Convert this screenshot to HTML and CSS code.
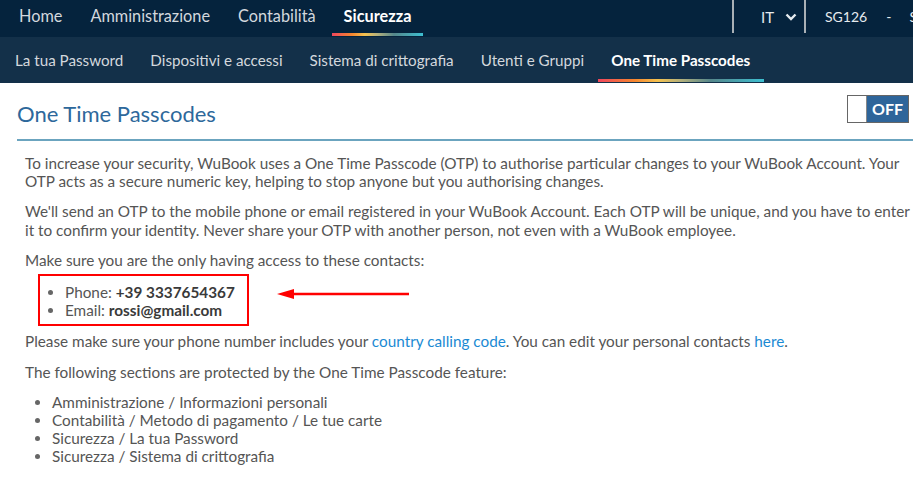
FILE: index.html
```html
<!DOCTYPE html>
<html lang="it">
<head>
<meta charset="utf-8">
<title>One Time Passcodes</title>
<link rel="stylesheet" href="styles.css">
</head>
<body>
<header class="topbar">
  <nav class="mainnav">
    <a class="mainnav__item">Home</a>
    <a class="mainnav__item">Amministrazione</a>
    <a class="mainnav__item">Contabilità</a>
    <a class="mainnav__item mainnav__item--active">Sicurezza</a>
  </nav>
  <div class="account">
    <div class="account__lang">
      <span>IT</span>
      <svg class="chev" width="12" height="8" viewBox="0 0 12 8"><path d="M1.5 1.5 L6 6 L10.5 1.5" fill="none" stroke="#e6ebef" stroke-width="2.4"/></svg>
    </div>
    <div class="account__user">
      <span>SG126</span><span class="dash">-</span><span>S</span>
    </div>
  </div>
</header>
<nav class="subnav">
  <a class="subnav__item">La tua Password</a>
  <a class="subnav__item">Dispositivi e accessi</a>
  <a class="subnav__item">Sistema di crittografia</a>
  <a class="subnav__item">Utenti e Gruppi</a>
  <a class="subnav__item subnav__item--active">One Time Passcodes</a>
</nav>
<main class="content">
  <div class="titlebar">
    <h1 class="title">One Time Passcodes</h1>
    <div class="toggle"><span class="toggle__knob"></span><span class="toggle__label">OFF</span></div>
  </div>
  <div class="body">
    <p>To increase your security, WuBook uses a One Time Passcode (OTP) to authorise particular changes to your WuBook Account. Your OTP acts as a secure numeric key, helping to stop anyone but you authorising changes.</p>
    <p>We'll send an OTP to the mobile phone or email registered in your WuBook Account. Each OTP will be unique, and you have to enter it to confirm your identity. Never share your OTP with another person, not even with a WuBook employee.</p>
    <p class="tight">Make sure you are the only having access to these contacts:</p>
    <div class="contacts">
      <ul class="contacts__list">
        <li>Phone: <b>+39 3337654367</b></li>
        <li>Email: <b>rossi@gmail.com</b></li>
      </ul>
      <svg class="arrow" width="134" height="12" viewBox="0 0 134 12"><path d="M16 6 H132" stroke="#f00" stroke-width="2.5"/><path d="M0 6 L17 1 L17 11 Z" fill="#f00"/></svg>
    </div>
    <p>Please make sure your phone number includes your <a class="link">country calling code</a>. You can edit your personal contacts <a class="link">here</a>.</p>
    <p>The following sections are protected by the One Time Passcode feature:</p>
    <ul class="sections">
      <li>Amministrazione / Informazioni personali</li>
      <li>Contabilità / Metodo di pagamento / Le tue carte</li>
      <li>Sicurezza / La tua Password</li>
      <li>Sicurezza / Sistema di crittografia</li>
    </ul>
  </div>
</main>
</body>
</html>
```
FILE: styles.css
```css
* { box-sizing: border-box; }
html, body { margin: 0; padding: 0; }
body {
  font-family: Lato, "Noto Sans", sans-serif;
  background: #fff;
  color: #555;
  width: 913px;
  overflow: hidden;
}
a { text-decoration: none; cursor: pointer; }

.topbar {
  display: grid;
  grid-template-columns: 732px 181px;
  height: 37px;
  background: #05233d;
  overflow: hidden;
}
.mainnav { display: flex; padding-left: 7px; gap: 4px; }
.mainnav__item {
  position: relative;
  padding: 0 12px;
  height: 37px;
  line-height: 32px;
  font-size: 16.3px;
  color: #d3d8dd;
}
.mainnav__item--active { color: #fff; font-weight: 700; }
.mainnav__item--active::after, .subnav__item--active::after {
  content: "";
  position: absolute;
  left: 0; right: 0;
  height: 3px;
  background: linear-gradient(90deg, #f0475d 0%, #f6862e 22%, #f5c24f 36%, #b3b07c 50%, #55878b 68%, #3dbfd1 100%);
}
.mainnav__item--active::after { bottom: 1px; }

.account { display: flex; height: 37px; overflow: hidden; }
.account__lang {
  display: flex; align-items: center; gap: 11px;
  flex: 0 0 74px;
  height: 33px;
  padding-left: 27px;
  border-left: 2px solid #a9b0b6;
  border-right: 2px solid #a9b0b6;
  color: #e6ebef; font-size: 15px;
}
.account__user {
  display: flex; align-items: center;
  height: 33px;
  padding-left: 19px;
  color: #e6ebef; font-size: 14px; white-space: nowrap;
}
.dash { margin: 0 18px 0 19px; }

.subnav {
  display: flex;
  height: 46px;
  background: #133049;
  padding-left: 1.5px;
}
.subnav__item {
  position: relative;
  padding: 0 13.5px;
  line-height: 46px;
  height: 46px;
  font-size: 15.2px;
  color: #d3d8dd;
  white-space: nowrap;
}
.subnav__item--active { color: #fff; font-weight: 700; }
.subnav__item--active::after { bottom: 1px; }

.content { padding: 0 0 0 17px; }
.titlebar {
  display: flex; align-items: center; justify-content: space-between;
  height: 58px;
  padding-top: 4px;
  padding-right: 4px;
  border-bottom: 2px solid #6ba4bf;
}
.title {
  margin: 0;
  font-size: 22px;
  font-weight: 400;
  color: #2d689b;
}
.toggle {
  display: flex;
  width: 62px; height: 28px;
  border: 1.5px solid #666;
  margin-top: -8px;
}
.toggle__knob { width: 19px; background: #fff; border-right: 1px solid #888; }
.toggle__label {
  flex: 1;
  background: #2e659a;
  color: #fff;
  font-size: 16px;
  font-weight: 700;
  text-align: center;
  line-height: 25px;
}

.body { padding: 13px 0 0 8px; font-size: 15.3px; line-height: 18.2px; }
.body p { margin: 0 0 12px; }
.body p.tight { margin-bottom: 5px; }
.body b { color: #3a3a3a; }
.link { color: #1b8ad3; }

.contacts {
  position: relative;
  width: fit-content;
  margin-left: 13px;
  margin-bottom: 6px;
  border: 2px solid #f00;
  padding: 7px 12px 5px 0;
}
.contacts__list { margin: 0; padding-left: 25px; }
.arrow { position: absolute; left: 237px; top: 12px; }

.sections { margin: 12px 0 0; padding-left: 27px; }
ul li::marker { color: #666; }
```
